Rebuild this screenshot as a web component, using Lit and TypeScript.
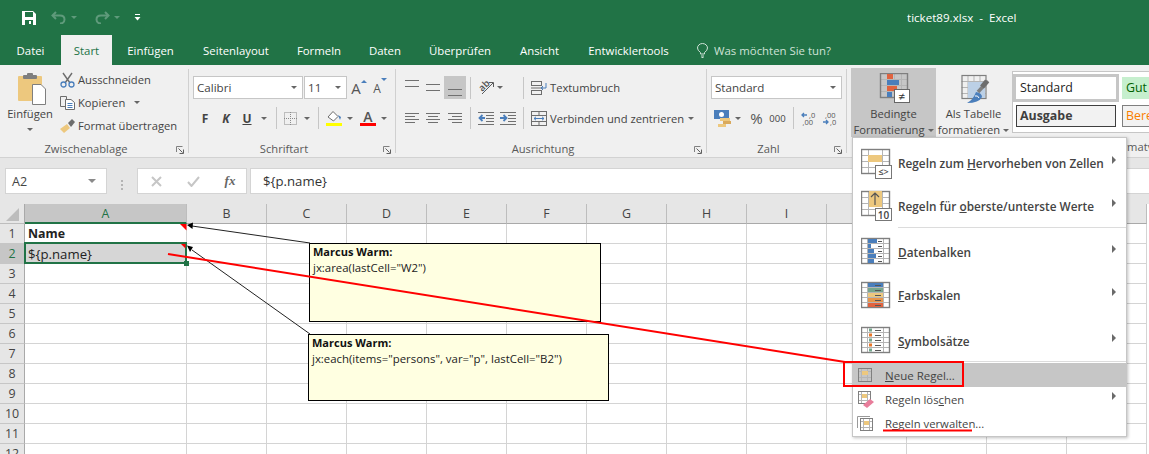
import { LitElement, html, css, svg } from 'lit';
import { customElement } from 'lit/decorators.js';

const TABS = [
  { label: 'Datei', w: 61 },
  { label: 'Start', w: 51, active: true },
  { label: 'Einfügen', w: 77 },
  { label: 'Seitenlayout', w: 94 },
  { label: 'Formeln', w: 72 },
  { label: 'Daten', w: 60 },
  { label: 'Überprüfen', w: 90 },
  { label: 'Ansicht', w: 69 },
  { label: 'Entwicklertools', w: 109 },
];
const COLS = ['B', 'C', 'D', 'E', 'F', 'G', 'H', 'I', 'J', 'K', 'L', 'M'];
const ROWS = [1, 2, 3, 4, 5, 6, 7, 8, 9, 10, 11, 12];

const GREY = '#7f7f7f';
const BLUE = '#4a7ebb';
const TAN = '#edc87e';
const ORANGE = '#e0633f';

// table outline used by most of the conditional formatting icons:
// xs / ys are the inner line offsets, the outer frame is darker than the inner lines
function table(x: number, y: number, w: number, h: number, xs: number[], ys: number[], frame = 1.4) {
  return svg`
    ${xs.map((o) => svg`<path d="M${x + o + 0.5} ${y}V${y + h}" stroke="#b5b5b5" fill="none" />`)}
    ${ys.map((o) => svg`<path d="M${x} ${y + o + 0.5}H${x + w}" stroke="#b5b5b5" fill="none" />`)}
    <rect x=${x + 0.5} y=${y + 0.5} width=${w} height=${h} stroke=${GREY} stroke-width=${frame} fill="none" />
  `;
}

function lines(w: number, ys: number[], widths: number[] = [], color = '#707070') {
  return html`<svg width=${w} height="16" viewBox="0 0 ${w} 16">
    ${ys.map((y, i) => svg`<path d="M${w - (widths[i] ?? w)} ${y + 0.5}H${w}" stroke=${color} />`)}
  </svg>`;
}

function leftLines(w: number, ys: number[], widths: number[] = [], color = '#707070') {
  return html`<svg width=${w} height="16" viewBox="0 0 ${w} 16">
    ${ys.map((y, i) => svg`<path d="M0 ${y + 0.5}H${widths[i] ?? w}" stroke=${color} />`)}
  </svg>`;
}

function centerLines(w: number, ys: number[], widths: number[]) {
  return html`<svg width=${w} height="16" viewBox="0 0 ${w} 16">
    ${ys.map((y, i) => svg`<path d="M${(w - widths[i]) / 2} ${y + 0.5}h${widths[i]}" stroke="#707070" />`)}
  </svg>`;
}

const launcher = html`<svg class="launcher" width="8" height="8" viewBox="0 0 8 8">
  <path d="M0.5 6V0.5H6.5" stroke="#808080" fill="none" />
  <path d="M2.5 2.5L6.5 6.5M7.5 3.5V7.5H3.5" stroke="#606060" fill="none" />
</svg>`;

const caret = html`<span class="caret"></span>`;

@customElement('app-root')
export class AppRoot extends LitElement {
  static styles = css`
    :host {
      display: block;
      width: 1149px;
      height: 454px;
      overflow: hidden;
      font-family: "Open Sans", "Noto Sans", sans-serif;
      font-size: 11.2px;
      color: #444;
    }
    svg { display: block; flex: none; }
    .page {
      position: relative;
      width: 1149px;
      height: 454px;
      overflow: hidden;
      display: flex;
      flex-direction: column;
      background: #fff;
    }
    .caret {
      display: block;
      width: 0;
      height: 0;
      border-top: 3px solid #666;
      border-left: 3px solid transparent;
      border-right: 3px solid transparent;
    }

    /* title bar */
    .titlebar {
      height: 35px;
      flex: none;
      background: #217346;
      color: #fff;
      display: flex;
      align-items: center;
    }
    .qat {
      width: 907px;
      flex: none;
      display: grid;
      grid-template-columns: 22px 14px 15px 15px 16px 12px 16px 14px 6px 14px 6px;
      align-items: center;
      justify-items: center;
    }
    .qat .caret { border-top-color: #5f9a7b; }
    .title { font-size: 11.6px; white-space: pre; }

    /* tabs */
    .tabs {
      height: 30px;
      flex: none;
      background: #217346;
      color: #fff;
      display: flex;
      align-items: stretch;
    }
    .tab {
      display: flex;
      align-items: center;
      justify-content: center;
      box-sizing: border-box;
      font-size: 11.4px;
    }
    .tab.active { background: #f0f0f0; color: #217346; }
    .tip {
      display: flex;
      align-items: center;
      gap: 6px;
      margin-left: 14px;
      color: #cfe2d7;
      font-size: 11.4px;
    }

    /* ribbon */
    .ribbon {
      height: 92px;
      flex: none;
      background: #f0f0f0;
      border-bottom: 1px solid #d2d2d2;
      display: flex;
      overflow: hidden;
    }
    .gsep { width: 1px; height: 84px; margin-top: 4px; background: #d0d0d0; flex: none; }
    .group { flex: none; display: flex; flex-direction: column; height: 92px; }
    .g-clip { width: 188px; }
    .g-font { width: 206px; }
    .g-align { width: 310px; }
    .g-num { width: 139px; }
    .g-styles { flex: 1; min-width: 0; }
    .glabel {
      margin-top: auto;
      margin-bottom: 1px;
      height: 16px;
      display: grid;
      grid-template-columns: 1fr 16px;
      align-items: center;
      justify-items: center;
      color: #595959;
      font-size: 11.2px;
      white-space: nowrap;
    }
    .launcher { margin-top: 4px; }

    .clip-body { display: flex; height: 75px; }
    .paste {
      width: 60px;
      flex: none;
      display: flex;
      flex-direction: column;
      align-items: center;
      padding-top: 8px;
      box-sizing: border-box;
    }
    .paste svg { margin-left: 4px; }
    .paste-label { margin-top: 1px; line-height: 16px; }
    .paste .caret { margin-top: 6px; }
    .clip-cmds { display: flex; flex-direction: column; padding-top: 3px; }
    .cmd { height: 23px; display: flex; align-items: center; gap: 3px; white-space: nowrap; }
    .cmd .caret { margin-left: 6px; }

    .r1 { height: 23px; margin-top: 11px; display: grid; align-items: center; justify-items: center; }
    .r2 { height: 22px; margin-top: 8px; display: grid; align-items: center; justify-items: center; }
    .combo {
      box-sizing: border-box;
      height: 23px;
      background: #fff;
      border: 1px solid #c6c6c6;
      display: flex;
      align-items: center;
      justify-content: space-between;
      padding: 0 5px 0 3px;
      width: 100%;
      color: #444;
    }
    .combo span:first-child { font-size: 11.6px; }
    .vsep { width: 1px; height: 22px; background: #c6c6c6; }
    .vsep.end { justify-self: end; }

    .font-r1 { margin-left: 4px; grid-template-columns: 110px 1px 43px 24px 18px; }
    .font-r2 {
      margin-left: 6px;
      grid-template-columns: 20px 22px 20px 14px 11px 17px 16px 7px 24px 8px 28px 4px;
    }
    .fmt { font-weight: 700; font-size: 12px; color: #444; }
    .grow { font-size: 15px; line-height: 18px; color: #555; }
    .shrink { font-size: 12px; line-height: 18px; color: #555; margin-top: 3px; }
    .grow-wrap { display: flex; align-items: flex-start; }
    .tri-up { width: 0; height: 0; border-bottom: 3px solid #4a7ebb; border-left: 3px solid transparent; border-right: 3px solid transparent; margin-top: 1px; }
    .tri-down { width: 0; height: 0; border-top: 3px solid #4a7ebb; border-left: 3px solid transparent; border-right: 3px solid transparent; margin-top: 1px; }
    .fcolor { width: 16px; display: flex; flex-direction: column; align-items: center; }
    .fcolor span { font-size: 14px; line-height: 13px; font-weight: 600; color: #555; }
    .fcolor i { display: block; width: 16px; height: 3px; background: #f00; }

    .align-r1 {
      margin-left: 5px;
      grid-template-columns: 21px 22px 22px 9px 22px 6px 21px 1fr;
    }
    .align-r2 {
      margin-left: 5px;
      grid-template-columns: 21px 22px 22px 9px 22px 22px 5px 1fr;
    }
    .hl {
      width: 22px;
      height: 23px;
      background: #c6c6c6;
      display: flex;
      align-items: center;
      justify-content: center;
    }
    .wide {
      justify-self: stretch;
      display: flex;
      align-items: center;
      gap: 3px;
      padding: 0 12px 0 7px;
      white-space: nowrap;
    }
    .wide .caret { margin-left: auto; }

    .num-r1 { margin-left: 4px; margin-right: 4px; grid-template-columns: 1fr; }
    .num-r2 {
      margin-left: 5px;
      grid-template-columns: 21px 10px 27px 15px 16px 14px 30px;
    }
    .pct { font-size: 15px; color: #555; }
    .k { font-size: 9.5px; color: #444; }

    .styles-top { display: flex; height: 72px; align-items: flex-start; padding-left: 4px; }
    .big {
      height: 69px;
      margin-top: 3px;
      box-sizing: border-box;
      display: flex;
      flex-direction: column;
      align-items: center;
      line-height: 16px;
      flex: none;
      white-space: nowrap;
    }
    .big.on { width: 85px; background: #c6c6c6; padding-top: 5px; }
    .big.off { width: 73px; padding-top: 6px; margin-left: 1px; }
    .big .txt { margin-top: 2px; }
    .big .drop { display: flex; align-items: center; gap: 3px; }
    .gallery {
      margin-left: 2px;
      margin-top: 6px;
      width: 200px;
      height: 62px;
      flex: none;
      box-sizing: border-box;
      background: #fff;
      border: 1px solid #c6c6c6;
      padding-top: 2px;
      display: grid;
      grid-template-columns: 106px 100px;
      grid-template-rows: 28px 22px;
      column-gap: 3px;
      row-gap: 3px;
      font-size: 12.4px;
    }
    .cs { box-sizing: border-box; display: flex; align-items: center; padding-left: 3px; padding-bottom: 2px; white-space: nowrap; color: #222; }
    .cs.standard { border: 3px solid #c6c6c6; padding-left: 4px; }
    .cs.gut { background: #c6efce; color: #006100; height: 22px; margin-top: 3px; padding-left: 4px; }
    .cs.ausgabe { margin: 0 3px; border: 1px solid #3f3f3f; background: #f2f2f2; color: #3f3f3f; font-weight: 700; }
    .cs.ber { border: 1px solid #7f7f7f; background: #f2f2f2; color: #fa7d00; }
    .styles-label { margin-left: 263px; margin-top: 2px; line-height: 16px; color: #595959; white-space: nowrap; }

    /* formula bar */
    .fbar {
      height: 46px;
      flex: none;
      background: #e6e6e6;
      display: flex;
      padding: 10px 0 0 5px;
      box-sizing: border-box;
    }
    .fbox {
      height: 26px;
      box-sizing: border-box;
      background: #fff;
      border: 1px solid #d4d4d4;
      display: flex;
      align-items: center;
    }
    .namebox { width: 102px; justify-content: space-between; padding: 0 10px 0 6px; font-size: 12.6px; }
    .namebox .caret { border-top-width: 4px; border-left-width: 4px; border-right-width: 4px; border-top-color: #8a8a8a; }
    .grip { width: 30px; flex: none; display: flex; align-items: center; justify-content: center; }
    .fbtns { width: 110px; display: grid; grid-template-columns: 37px 37px 36px; justify-items: center; }
    .fx { font-family: "Liberation Serif", serif; font-style: italic; font-weight: 700; font-size: 13px; color: #666; }
    .finput { flex: 1; margin-left: 3px; padding-left: 12px; font-size: 13.2px; color: #333; border-right: 0; }

    /* sheet */
    .sheet {
      flex: 1;
      min-height: 0;
      display: grid;
      grid-template-columns: 25px 162px repeat(12, 80px);
      grid-template-rows: 20px;
      grid-auto-rows: 20px;
      overflow: hidden;
      background: #fff;
    }
    .corner { background: #e6e6e6; border-right: 1px solid #a9a9a9; border-bottom: 1px solid #bdbdbd; box-sizing: border-box; padding: 4px 0 0 6px; }
    .ch, .rh {
      background: #e6e6e6;
      box-sizing: border-box;
      display: flex;
      align-items: center;
      justify-content: center;
      color: #444;
      font-size: 12.4px;
    }
    .ch { border-right: 1px solid #bdbdbd; border-bottom: 1px solid #a9a9a9; }
    .rh { border-right: 1px solid #a9a9a9; border-bottom: 1px solid #c6c6c6; }
    .ch.sel { background: #c6c6c6; color: #217346; border-bottom: 2px solid #217346; }
    .rh.sel { background: #c6c6c6; color: #217346; }
    .cell {
      box-sizing: border-box;
      border-right: 1px solid #d4d4d4;
      border-bottom: 1px solid #d4d4d4;
      display: flex;
      align-items: center;
      padding-left: 3px;
      font-size: 13.2px;
      color: #222;
    }
    .cell.bold { font-weight: 700; font-size: 12.4px; }
    .cell.active { background: #d6d6d6; position: relative; }
    .selbox {
      position: absolute;
      left: -1px;
      top: -2px;
      right: -1px;
      bottom: -1px;
      border: 2px solid #217346;
    }
    .handle {
      position: absolute;
      right: -3px;
      bottom: -3px;
      width: 5px;
      height: 5px;
      background: #217346;
    }

    /* comments */
    .comment {
      position: absolute;
      box-sizing: border-box;
      background: #ffffe1;
      border: 1px solid #000;
      padding: 0 3px;
      font-size: 11.4px;
      line-height: 16px;
      color: #222;
      white-space: nowrap;
    }
    .comment b { display: block; color: #111; font-size: 11px; }
    .c1 { left: 309px; top: 243px; width: 292px; height: 79px; }
    .c2 { left: 308px; top: 334px; width: 301px; height: 67px; }

    /* dropdown */
    .menu {
      position: absolute;
      left: 852px;
      top: 137px;
      width: 275px;
      height: 300px;
      box-sizing: border-box;
      background: #fff;
      border: 1px solid #c6c6c6;
      box-shadow: 1px 1px 3px rgba(0, 0, 0, 0.25);
      padding-top: 3px;
      display: flex;
      flex-direction: column;
    }
    .mi {
      display: grid;
      align-items: center;
      white-space: nowrap;
      color: #444;
      flex: none;
    }
    .mi.large {
      grid-template-columns: 37px 1fr 14px;
      padding-left: 8px;
      font-weight: 600;
      font-size: 11.8px;
      box-sizing: border-box;
    }
    .h44 { height: 44px; }
    .h43 { height: 43px; }
    .h42 { height: 42px; }
    .h45 { height: 45px; padding-top: 4px; }
    .mi.small {
      grid-template-columns: 28px 1fr 14px;
      padding-left: 4px;
      height: 24px;
      font-size: 11.3px;
    }
    .mi.hot { background: #c6c6c6; font-size: 11.5px; }
    .arrow {
      width: 0;
      height: 0;
      border-left: 4px solid #6a6a6a;
      border-top: 4px solid transparent;
      border-bottom: 4px solid transparent;
      margin-bottom: 6px;
    }
    .msep { height: 1px; background: #dcdcdc; margin-left: 45px; flex: none; }
    .msep.full { margin-left: 0; margin-bottom: 1px; }
    .msep.first { margin-bottom: 2px; }

    .marks { position: absolute; left: 0; top: 0; pointer-events: none; }
    .ico-text { font-family: "Open Sans", sans-serif; }
  `;

  private renderTitle() {
    return html`<div class="titlebar">
      <div class="qat">
        <i></i>
        <svg width="14" height="14" viewBox="0 0 14 14">
          <path d="M0 0H11L14 3V14H0Z" fill="#fff" />
          <rect x="3" y="1" width="8" height="5" fill="#217346" />
          <rect x="3" y="9" width="8" height="5" fill="#217346" />
          <rect x="7" y="10" width="2" height="3" fill="#fff" />
        </svg>
        <i></i>
        <svg width="15" height="13" viewBox="0 0 15 13" fill="none" stroke="#5f9a7b" stroke-width="2">
          <path d="M5 1L1.5 4.5L5 8" />
          <path d="M2 4.5H9Q13.5 4.5 13.5 8.5T9 12.5" />
        </svg>
        ${caret}
        <i></i>
        <svg width="15" height="13" viewBox="0 0 15 13" fill="none" stroke="#5f9a7b" stroke-width="2">
          <path d="M10 1L13.5 4.5L10 8" />
          <path d="M13 4.5H6Q1.5 4.5 1.5 8.5T6 12.5" />
        </svg>
        ${caret}
        <i></i>
        <svg width="7" height="7" viewBox="0 0 7 7"><path d="M1 0.5H6" stroke="#fff" /><path d="M0.5 3H6.5L3.5 6.5Z" fill="#fff" /></svg>
      </div>
      <div class="title">ticket89.xlsx  -  Excel</div>
    </div>`;
  }

  private renderTabs() {
    return html`<div class="tabs">
      ${TABS.map(
        (t) => html`<div class="tab ${t.active ? 'active' : ''}" style="width:${t.w}px">${t.label}</div>`
      )}
      <div class="tip">
        <svg width="11" height="15" viewBox="0 0 11 15" fill="none" stroke="#cfe2d7">
          <path d="M3.5 11V9.5Q0.5 7.5 0.5 5A5 4.5 0 0 1 10.5 5Q10.5 7.5 7.5 9.5V11Z" />
          <path d="M4 13H7M4.5 14.5H6.5" />
        </svg>
        <span>Was möchten Sie tun?</span>
      </div>
    </div>`;
  }

  private renderClipboard() {
    return html`<div class="group g-clip">
      <div class="clip-body">
        <div class="paste">
          <svg width="28" height="32" viewBox="0 0 28 32">
            <rect x="0" y="3" width="24" height="25" rx="1" fill=${TAN} />
            <rect x="5" y="2" width="14" height="4" rx="1" fill="#7f7f7f" />
            <rect x="9" y="0" width="6" height="3" rx="1" fill="#7f7f7f" />
            <path d="M14.5 11.5H23L27.5 16V31.5H14.5Z" fill="#fff" stroke="#7f7f7f" />
          </svg>
          <span class="paste-label">Einfügen</span>
          ${caret}
        </div>
        <div class="clip-cmds">
          <div class="cmd">
            <svg width="15" height="16" viewBox="0 0 15 16" fill="none">
              <path d="M3 1L10 11M12 1L5 11" stroke="#6d6d6d" stroke-width="1.4" />
              <circle cx="3.5" cy="12.5" r="2.5" stroke="#4a7ebb" stroke-width="1.3" />
              <circle cx="11.5" cy="12.5" r="2.5" stroke="#4a7ebb" stroke-width="1.3" />
            </svg>
            <span>Ausschneiden</span>
          </div>
          <div class="cmd">
            <svg width="15" height="14" viewBox="0 0 15 14" fill="none" stroke="#6d6d6d">
              <path d="M0.5 0.5H6.5V10.5H0.5Z" />
              <path d="M5.5 3.5H11L14.5 6.5V13.5H5.5Z" fill="#fff" />
              <path d="M7.5 7.5H12.5M7.5 9.5H12.5M7.5 11.5H12.5" stroke="#4a7ebb" />
            </svg>
            <span>Kopieren</span>${caret}
          </div>
          <div class="cmd">
            <svg width="15" height="14" viewBox="0 0 15 14">
              <path d="M0 10L7 5L10 9L4 14Z" fill=${TAN} />
              <path d="M8 4L12 0L15 3L11 8Z" fill="#6d6d6d" />
            </svg>
            <span>Format übertragen</span>
          </div>
        </div>
      </div>
      <div class="glabel"><span>Zwischenablage</span>${launcher}</div>
    </div>`;
  }

  private renderFont() {
    return html`<div class="group g-font">
      <div class="r1 font-r1">
        <div class="combo"><span>Calibri</span>${caret}</div>
        <i></i>
        <div class="combo"><span>11</span>${caret}</div>
        <div class="grow-wrap"><span class="grow">A</span><span class="tri-up"></span></div>
        <div class="grow-wrap"><span class="shrink">A</span><span class="tri-down"></span></div>
      </div>
      <div class="r2 font-r2">
        <span class="fmt">F</span>
        <span class="fmt"><i>K</i></span>
        <span class="fmt"><u>U</u></span>
        ${caret}
        <span class="vsep"></span>
        <svg width="13" height="13" viewBox="0 0 13 13" fill="none" stroke="#8a8a8a" stroke-dasharray="1 1">
          <rect x="0.5" y="0.5" width="12" height="12" /><path d="M6.5 0V13M0 6.5H13" />
        </svg>
        ${caret}
        <span class="vsep"></span>
        <svg width="16" height="16" viewBox="0 0 16 16">
          <path d="M2 7L7 1.5L12 6.5L7.5 11Z" fill="#fff" stroke="#6d6d6d" />
          <path d="M12 5L15 7L14 10Z" fill="#4a7ebb" />
          <rect x="0" y="13" width="16" height="3" fill="#ffff00" />
        </svg>
        ${caret}
        <div class="fcolor"><span>A</span><i></i></div>
        ${caret}
      </div>
      <div class="glabel"><span>Schriftart</span>${launcher}</div>
    </div>`;
  }

  private renderAlign() {
    return html`<div class="group g-align">
      <div class="r1 align-r1">
        ${centerLines(14, [0, 6], [14, 14])}
        ${centerLines(14, [4, 10], [14, 14])}
        <div class="hl">${centerLines(14, [9, 15], [14, 14])}</div>
        <span class="vsep"></span>
        <svg width="17" height="17" viewBox="0 0 17 17" fill="none">
          <text class="ico-text" x="1" y="11" font-size="9.5" font-weight="600" fill="#555" transform="rotate(-45 5 8)">ab</text>
          <path d="M4 15L15 4M11 3.5H15.5V8" stroke="#5a5a5a" />
        </svg>
        ${caret}
        <span class="vsep end"></span>
        <div class="wide">
          <svg width="16" height="14" viewBox="0 0 16 14" fill="none">
            <rect x="0.5" y="0.5" width="10" height="4" stroke="#6d6d6d" />
            <rect x="0.5" y="9.5" width="10" height="4" stroke="#6d6d6d" />
            <path d="M0 7H12" stroke="#6d6d6d" />
            <path d="M15 2V7H10M12 5L10 7L12 9" stroke="#4a7ebb" />
          </svg>
          <span>Textumbruch</span>
        </div>
      </div>
      <div class="r2 align-r2">
        ${leftLines(14, [3, 6, 9, 12], [14, 10, 14, 10])}
        ${centerLines(14, [3, 6, 9, 12], [14, 10, 14, 10])}
        ${lines(14, [3, 6, 9, 12], [14, 10, 14, 10])}
        <span class="vsep"></span>
        <svg width="16" height="14" viewBox="0 0 16 14">
          <path d="M0 1.5H16M8 4.5H16M8 7.5H16M8 10.5H16M0 13.5H16" stroke="#707070" />
          <path d="M7 7H2M4.5 4L1.5 7L4.5 10" fill="none" stroke="#4a7ebb" stroke-width="1.8" />
        </svg>
        <svg width="16" height="14" viewBox="0 0 16 14">
          <path d="M0 1.5H16M8 4.5H16M8 7.5H16M8 10.5H16M0 13.5H16" stroke="#707070" />
          <path d="M0 7H6M3.5 4L6.5 7L3.5 10" fill="none" stroke="#4a7ebb" stroke-width="1.8" />
        </svg>
        <span class="vsep end"></span>
        <div class="wide">
          <svg width="16" height="15" viewBox="0 0 16 15" fill="none">
            <rect x="0.5" y="0.5" width="15" height="14" stroke="#6d6d6d" />
            <path d="M0 4.5H16M0 10.5H16M8 0V4M8 11V15" stroke="#6d6d6d" />
            <path d="M3 7.5H13M3 7.5L5 5.8M3 7.5L5 9.2M13 7.5L11 5.8M13 7.5L11 9.2" stroke="#4a7ebb" />
          </svg>
          <span>Verbinden und zentrieren</span>
          ${caret}
        </div>
      </div>
      <div class="glabel"><span>Ausrichtung</span>${launcher}</div>
    </div>`;
  }

  private renderNumber() {
    return html`<div class="group g-num">
      <div class="r1 num-r1">
        <div class="combo"><span>Standard</span>${caret}</div>
      </div>
      <div class="r2 num-r2">
        <svg width="17" height="17" viewBox="0 0 17 17">
          <rect x="0" y="0" width="15" height="9" fill="#4a7ebb" />
          <circle cx="7.5" cy="4.5" r="2.5" fill="#fff" />
          <rect x="6" y="8" width="10" height="3" fill=${TAN} />
          <rect x="9" y="11" width="8" height="3" fill="#d9a95c" />
          <rect x="4" y="14" width="8" height="3" fill=${TAN} />
        </svg>
        ${caret}
        <span class="pct">%</span>
        <span class="k">000</span>
        <span class="vsep"></span>
        <svg width="15" height="15" viewBox="0 0 15 15">
          <path d="M1 4H6M3 2L1 4L3 6" fill="none" stroke="#4a7ebb" stroke-width="1.3" />
          <text class="ico-text" x="8" y="6.5" font-size="7.5" fill="#555">,0</text>
          <text class="ico-text" x="1.5" y="14" font-size="7.5" fill="#555">,00</text>
        </svg>
        <svg width="15" height="15" viewBox="0 0 15 15">
          <text class="ico-text" x="2" y="6.5" font-size="7.5" fill="#555">,00</text>
          <path d="M0 11H5M3 9L5 11L3 13" fill="none" stroke="#4a7ebb" stroke-width="1.3" />
          <text class="ico-text" x="7" y="14" font-size="7.5" fill="#555">,0</text>
        </svg>
      </div>
      <div class="glabel"><span>Zahl</span>${launcher}</div>
    </div>`;
  }

  private renderStyles() {
    return html`<div class="group g-styles">
      <div class="styles-top">
        <div class="big on">
          <svg width="32" height="31" viewBox="0 0 32 31">
            ${table(2, 0, 27, 24, [7, 14, 21], [6, 12, 18])}
            <rect x="9" y="1" width="6" height="5" fill=${ORANGE} />
            <rect x="9" y="7" width="12" height="5" fill=${BLUE} />
            <rect x="9" y="13" width="10" height="5" fill=${ORANGE} />
            <rect x="9" y="19" width="5" height="5" fill=${BLUE} />
            <rect x="16.5" y="16.5" width="15" height="13" fill="#fff" stroke="#666" />
            <text class="ico-text" x="24" y="27.5" font-size="12" text-anchor="middle" fill="#333">≠</text>
          </svg>
          <span class="txt">Bedingte</span>
          <span class="drop">Formatierung${caret}</span>
        </div>
        <div class="big off">
          <svg width="32" height="30" viewBox="0 0 32 30">
            ${table(3.5, 1, 24, 23, [6, 12, 18], [6, 12, 18], 1.2)}
            <rect x="10" y="8" width="17" height="16" fill="#bcd0e6" />
            <path d="M20 18L30 7" stroke="#7f7f7f" stroke-width="3.5" />
            <path d="M24 13L29 7" stroke="#6d6d6d" stroke-width="5" />
            <path d="M18 18Q24 19 24 23Q21 29 9 29Q15 26 18 18Z" fill="#4a7ebb" />
            <path d="M17 22Q20 21 21 24" stroke="#fff" fill="none" />
          </svg>
          <span class="txt">Als Tabelle</span>
          <span class="drop">formatieren${caret}</span>
        </div>
        <div class="gallery">
          <div class="cs standard">Standard</div>
          <div class="cs gut">Gut</div>
          <div class="cs ausgabe">Ausgabe</div>
          <div class="cs ber">Berechnung</div>
        </div>
      </div>
      <div class="styles-label">Formatvorlagen</div>
    </div>`;
  }

  private renderFormula() {
    return html`<div class="fbar">
      <div class="fbox namebox"><span>A2</span>${caret}</div>
      <div class="grip">
        <svg width="3" height="12" viewBox="0 0 3 12" fill="#b4b4b4">
          <rect y="0" width="2" height="2" /><rect y="4" width="2" height="2" /><rect y="8" width="2" height="2" />
        </svg>
      </div>
      <div class="fbox fbtns">
        <svg width="11" height="11" viewBox="0 0 11 11" stroke="#c6c6c6" stroke-width="2"><path d="M1 1L10 10M10 1L1 10" /></svg>
        <svg width="13" height="11" viewBox="0 0 13 11" fill="none" stroke="#c6c6c6" stroke-width="2"><path d="M1 6L4.5 10L12 1" /></svg>
        <span class="fx">f<span>x</span></span>
      </div>
      <div class="fbox finput">\${p.name}</div>
    </div>`;
  }

  private renderSheet() {
    return html`<div class="sheet">
      <div class="corner">
        <svg width="13" height="13" viewBox="0 0 13 13"><path d="M13 0V13H0Z" fill="#bdbdbd" /></svg>
      </div>
      <div class="ch sel">A</div>
      ${COLS.map((c) => html`<div class="ch">${c}</div>`)}
      ${ROWS.map(
        (r) => html`
          <div class="rh ${r === 2 ? 'sel' : ''}">${r}</div>
          ${r === 1
            ? html`<div class="cell bold">Name</div>`
            : r === 2
            ? html`<div class="cell active">\${p.name}<span class="selbox"></span><span class="handle"></span></div>`
            : html`<div class="cell"></div>`}
          ${COLS.map(() => html`<div class="cell"></div>`)}
        `
      )}
    </div>`;
  }

  private renderMenu() {
    return html`<div class="menu">
      <div class="mi large h43">
        <svg width="32" height="32" viewBox="0 0 32 32">
          ${table(0, 2, 28, 24, [7, 21], [6, 12, 18])}
          <rect x="7" y="8" width="14" height="7" fill=${TAN} />
          <rect x="14.5" y="18.5" width="16" height="13" fill="#fff" stroke="#777" />
          <text class="ico-text" x="22.5" y="28" font-size="9" text-anchor="middle" fill="#444">≤&gt;</text>
        </svg>
        <span>Regeln zum <u>H</u>ervorheben von Zellen</span>
        <span class="arrow"></span>
      </div>
      <div class="mi large h43">
        <svg width="32" height="32" viewBox="0 0 32 32">
          ${table(0, 1, 28, 24, [7, 21], [6, 12, 18])}
          <rect x="8" y="1" width="13" height="16" fill=${TAN} />
          <path d="M14 15V3M10 7L14 3L18 7" fill="none" stroke="#555" stroke-width="1.2" />
          <rect x="14.5" y="18.5" width="16" height="12" fill="#fff" stroke="#777" />
          <text class="ico-text" x="22.5" y="28.5" font-size="10" text-anchor="middle" fill="#444">10</text>
        </svg>
        <span>Regeln für <u>o</u>berste/unterste Werte</span>
        <span class="arrow"></span>
      </div>
      <div class="msep first"></div>
      <div class="mi large h44">
        <svg width="32" height="32" viewBox="0 0 32 32">
          ${table(0, 2, 28, 25, [6, 22], [5, 10, 15, 20])}
          <rect x="7" y="3" width="9" height="4" fill=${BLUE} />
          <rect x="7" y="8" width="3" height="4" fill=${BLUE} />
          <rect x="7" y="13" width="6" height="4" fill=${BLUE} />
          <rect x="7" y="18" width="8" height="4" fill=${BLUE} />
          <rect x="7" y="23" width="6" height="4" fill=${BLUE} />
          <path d="M17 5.5H21M17 10.5H21M17 15.5H21M17 20.5H21M17 25.5H21" stroke="#555" />
        </svg>
        <span><u>D</u>atenbalken</span>
        <span class="arrow"></span>
      </div>
      <div class="mi large h42">
        <svg width="32" height="32" viewBox="0 0 32 32">
          ${table(0, 3, 28, 25, [6, 22], [5, 10, 15, 20])}
          <rect x="7" y="4" width="15" height="4" fill=${BLUE} />
          <rect x="7" y="9" width="15" height="4" fill="#76a68d" />
          <rect x="7" y="14" width="15" height="4" fill=${TAN} />
          <rect x="7" y="19" width="15" height="4" fill="#e8964a" />
          <rect x="7" y="24" width="15" height="4" fill=${ORANGE} />
          <path d="M14 6.5H20M14 11.5H20M14 16.5H20M14 21.5H20M14 26.5H20" stroke="#555" />
        </svg>
        <span><u>F</u>arbskalen</span>
        <span class="arrow"></span>
      </div>
      <div class="mi large h45">
        <svg width="32" height="32" viewBox="0 0 32 32">
          ${table(0, 2, 28, 25, [6, 22], [5, 10, 15, 20])}
          <rect x="8" y="3.5" width="3" height="3" fill="#76a68d" />
          <rect x="8" y="8.5" width="3" height="3" fill="#e8762a" />
          <rect x="8" y="13.5" width="3" height="3" fill="#76a68d" />
          <rect x="8" y="18.5" width="3" height="3" fill="#e8762a" />
          <rect x="8" y="23.5" width="3" height="3" fill="#76a68d" />
          <path d="M14 5.5H20M14 10.5H20M14 15.5H20M14 20.5H20M14 25.5H20" stroke="#555" />
        </svg>
        <span><u>S</u>ymbolsätze</span>
        <span class="arrow"></span>
      </div>
      <div class="msep full"></div>
      <div class="mi small hot">
        <svg width="18" height="18" viewBox="0 0 18 18">
          ${table(1, 2, 13, 13, [3, 9], [3, 9], 1)}
          <rect x="5" y="5" width="6" height="4" fill=${TAN} />
        </svg>
        <span><u>N</u>eue Regel...</span>
        <i></i>
      </div>
      <div class="mi small">
        <svg width="18" height="18" viewBox="0 0 18 18">
          ${table(1, 1, 12, 12, [3, 9], [3, 9], 1)}
          <rect x="5" y="4" width="5" height="4" fill=${TAN} />
          <path d="M6 15L13 9L17 12L10 18Z" fill="#e87d9b" />
        </svg>
        <span>Regeln lös<u>c</u>hen</span>
        <span class="arrow"></span>
      </div>
      <div class="mi small">
        <svg width="18" height="18" viewBox="0 0 18 18">
          <path d="M0.5 14V2.5H13" fill="none" stroke="#999" />
          ${table(3, 4, 12, 12, [3, 9], [3, 9], 1)}
          <rect x="7" y="7" width="5" height="4" fill=${TAN} />
        </svg>
        <span>R<u>e</u>geln verwalten...</span>
        <i></i>
      </div>
    </div>`;
  }

  render() {
    return html`<div class="page">
      ${this.renderTitle()}
      ${this.renderTabs()}
      <div class="ribbon">
        ${this.renderClipboard()}<span class="gsep"></span>
        ${this.renderFont()}<span class="gsep"></span>
        ${this.renderAlign()}<span class="gsep"></span>
        ${this.renderNumber()}<span class="gsep"></span>
        ${this.renderStyles()}
      </div>
      ${this.renderFormula()}
      ${this.renderSheet()}

      <div class="comment c1"><b>Marcus Warm:</b>jx:area(lastCell="W2")</div>
      <div class="comment c2"><b>Marcus Warm:</b>jx:each(items="persons", var="p", lastCell="B2")</div>
      ${this.renderMenu()}

      <!-- annotations drawn on top of the screenshot -->
      <svg class="marks" width="1149" height="454" viewBox="0 0 1149 454" fill="none">
        <path d="M180 224H186.5V230.5Z" fill="#f00" />
        <path d="M181 244H185.5V248.5Z" fill="#f00" />
        <path d="M310 243L192 226" stroke="#222" />
        <path d="M187 225L193 222.5L192.5 229Z" fill="#000" />
        <path d="M310 334L192 250" stroke="#222" />
        <path d="M187 245.5L193 247L190 252Z" fill="#000" />
        <path d="M168 254L845 362" stroke="#f00" stroke-width="2" />
        <rect x="844" y="362" width="119" height="24" stroke="#f00" stroke-width="2" />
        <path d="M883 430.5H972" stroke="#f00" stroke-width="2" />
      </svg>
    </div>`;
  }
}
